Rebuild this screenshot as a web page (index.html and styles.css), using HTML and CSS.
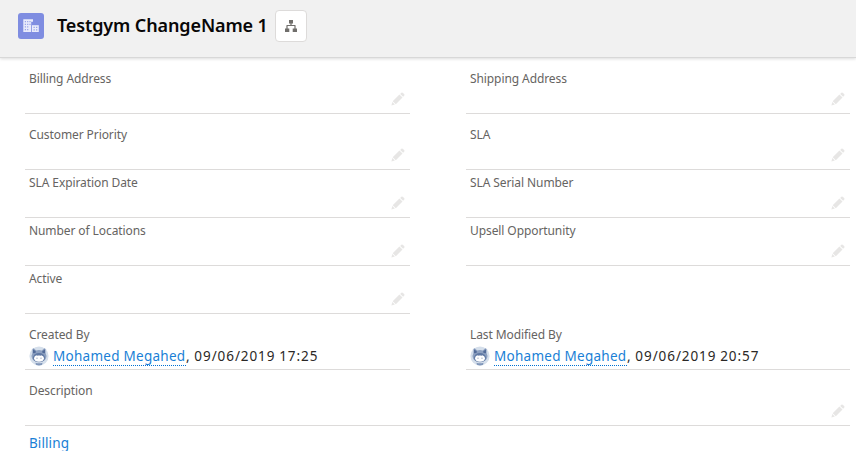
FILE: index.html
```html
<!DOCTYPE html>
<html lang="en">
<head>
<meta charset="utf-8">
<title>Testgym ChangeName 1</title>
<link rel="stylesheet" href="styles.css">
</head>
<body>
<svg class="defs" width="0" height="0" aria-hidden="true">
  <symbol id="pencil" viewBox="0 0 14 14">
    <path d="M.4 13.6 1.3 9.9 3.9 12.6zM1.7 9.2 8.4 2.5 11.5 5.6 4.8 12.3zM9.2 1.9 10.3.8Q11.2.1 12 .9L13.1 2Q13.9 2.8 13.2 3.7L12.1 4.8z"/>
  </symbol>
  <symbol id="astro" viewBox="0 0 20 20">
    <circle cx="10" cy="10" r="9.6" fill="#d5dfeb"/>
    <path d="M3.6 2.8Q4.2 2 5.2 2.7L7.2 4.5Q10 3.7 12.8 4.5L14.8 2.7Q15.8 2 16.4 2.8L16.6 7.2Q18 9.4 17 12.2 15.4 16 10 16T3 12.2Q2 9.4 3.4 7.2z" fill="#8da0c0"/>
    <path d="M3.9 3.2 6.8 5.2 6.5 7 4 7.2zM16.1 3.2 13.2 5.2 13.5 7 16 7.2z" fill="#526b98"/>
    <ellipse cx="10" cy="11.7" rx="6" ry="4.6" fill="#6079a4"/>
    <path d="M4.9 12.2Q5.4 9.4 8 9.2 9 10.3 10 9.3 11 10.3 12.1 9.2 14.7 9.6 15.1 12.2 14.4 15.8 10 15.8T4.9 12.2z" fill="#fff"/>
    <circle cx="8" cy="12.2" r=".6" fill="#8a99b3"/><circle cx="12" cy="12.2" r=".6" fill="#8a99b3"/>
    <path d="M6.4 16.8Q10 17.8 13.6 16.8L12.8 19.1Q10 20 7.2 19.1z" fill="#8197ba"/>
  </symbol>
</svg>
<header class="header">
  <svg class="account" viewBox="0 0 26 26" aria-hidden="true">
    <rect width="26" height="26" rx="3" fill="#7f8de1"/>
    <path d="M5.3 6.3h9.7v2.4h-1.8v10.3H5.3z" fill="#e9ebfb"/>
    <path d="M14 12.2h6.8V19H14z" fill="#e9ebfb"/>
    <path d="M6.8 8h1.2v1.2H6.8zm2.3 0h1.2v1.2H9.1zm2.3 0h1.2v1.2h-1.2zM6.8 10.7H8v1.2H6.8zm2.3 0h1.2v1.2H9.1zm2.3 0h1.2v1.2h-1.2zM6.8 13.3H8v1.2H6.8zm2.3 0h1.2v1.2H9.1zM6.8 16H8v1.2H6.8zm2.3 0h1.2v1.2H9.1zm6.4-2.2h1.3v1.2h-1.3zm2.5 0h1.3v1.2H18zm-2.5 2.4h1.3v1.2h-1.3zm2.5 0h1.3v1.2H18z" fill="#98a4e8"/>
  </svg>
  <h1 class="title">Testgym ChangeName 1</h1>
  <button class="hierarchy" aria-label="View account hierarchy">
    <svg width="12" height="12" viewBox="0 0 12 12" aria-hidden="true"><path d="M4 0h4v3.5H6.6v1.4H10Q10.6 4.9 10.6 5.5V8.6H12V12H7.7V8.6h1.7V6.1H2.6v2.5h1.7V12H0V8.6h1.4V5.5Q1.4 4.9 2 4.9h3.4V3.5H4z"/></svg>
  </button>
</header>
<main class="details">
  <div class="row tall">
    <div class="field"><span class="label">Billing Address</span><svg class="edit"><use href="#pencil"/></svg></div>
    <div class="field"><span class="label">Shipping Address</span><svg class="edit"><use href="#pencil"/></svg></div>
  </div>
  <div class="row tall">
    <div class="field"><span class="label">Customer Priority</span><svg class="edit"><use href="#pencil"/></svg></div>
    <div class="field"><span class="label">SLA</span><svg class="edit"><use href="#pencil"/></svg></div>
  </div>
  <div class="row">
    <div class="field"><span class="label">SLA Expiration Date</span><svg class="edit"><use href="#pencil"/></svg></div>
    <div class="field"><span class="label">SLA Serial Number</span><svg class="edit"><use href="#pencil"/></svg></div>
  </div>
  <div class="row">
    <div class="field"><span class="label">Number of Locations</span><svg class="edit"><use href="#pencil"/></svg></div>
    <div class="field"><span class="label">Upsell Opportunity</span><svg class="edit"><use href="#pencil"/></svg></div>
  </div>
  <div class="row">
    <div class="field"><span class="label">Active</span><svg class="edit"><use href="#pencil"/></svg></div>
  </div>
  <div class="row tall">
    <div class="field"><span class="label">Created By</span>
      <div class="value"><svg class="avatar"><use href="#astro"/></svg><a class="user">Mohamed Megahed</a><span class="date">, 09/06/2019 17:25</span></div></div>
    <div class="field"><span class="label">Last Modified By</span>
      <div class="value"><svg class="avatar"><use href="#astro"/></svg><a class="user">Mohamed Megahed</a><span class="date">, 09/06/2019 20:57</span></div></div>
  </div>
  <div class="row tall full">
    <div class="field"><span class="label">Description</span><svg class="edit"><use href="#pencil"/></svg></div>
  </div>
  <a class="more">Billing</a>
</main>
</body>
</html>
```
FILE: styles.css
```css
* { box-sizing: border-box; }
html, body { margin: 0; height: 100%; overflow: hidden; }
body { background: #fff; color: #2b2826; font-family: "Noto Sans", "Open Sans", sans-serif; font-size: 14px; }
.defs { position: absolute; }
.header { height: 58px; display: flex; align-items: flex-start; padding: 10px 18px 0; background: #f1f1f1; border-bottom: 1px solid #d8d8d8; box-shadow: 0 1px 3px rgba(0,0,0,.14); }
.account { width: 26px; height: 26px; margin-top: 3px; }
.title { width: 210px; margin: 0 8px 0 13px; font-size: 18px; line-height: 31px; font-weight: 600; letter-spacing: -.12px; color: #080707; white-space: nowrap; }
.hierarchy { width: 32px; height: 32px; padding: 0; display: flex; align-items: center; justify-content: center; background: #fff; border: 1px solid #dddbda; border-radius: 4px; fill: #706e6b; }
.details { padding: 0 6px 0 25px; }
.row { height: 48px; display: grid; grid-template-columns: 385px 384px; column-gap: 56px; }
.row.tall { height: 56px; }
.row.full { grid-template-columns: 1fr; }
.field { display: flex; flex-direction: column; padding: 4px 4px 0; border-bottom: 1px solid #dddbda; }
.tall .field { padding-top: 12px; }
.label { align-self: flex-start; font-size: 12px; line-height: 18px; letter-spacing: -.09px; color: #666462; white-space: nowrap; }
.edit { width: 14px; height: 14px; margin: 4px 1px 0 auto; fill: #e7e6e5; }
.value { display: flex; align-items: center; height: 22px; margin-top: 1px; font-size: 13.5px; white-space: nowrap; }
.avatar { width: 20px; height: 20px; margin-right: 4px; }
.user { width: 133px; height: 20px; color: #1a7fd6; letter-spacing: .27px; line-height: 21px; border-bottom: 1px dotted #0070d2; }
.date { line-height: 20px; letter-spacing: .92px; word-spacing: -.6px; }
.more { display: block; width: 60px; margin: 9px 4px 0; font-size: 13.5px; letter-spacing: .1px; line-height: 16px; color: #1a7fd6; }
```
